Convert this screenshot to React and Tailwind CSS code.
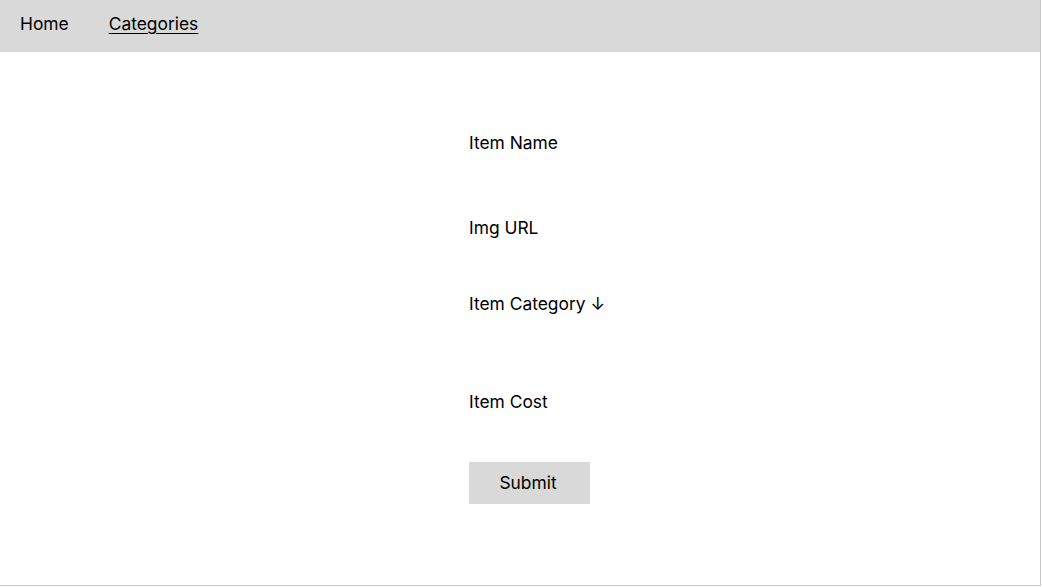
export default function App() {
  return (
    <div className="w-[1042px] h-[587px] bg-white" style={{ fontFamily: "Inter, 'Noto Sans', sans-serif" }}>
      <div className="w-[1041px] h-[586px] border-r border-b border-[#c8c8c8] flex flex-col">
        <nav className="h-[52px] bg-[#d9d9d9] flex items-center pl-[20px] pb-[4px] gap-[40px] text-[17.4px] text-black">
          <span className="leading-[22px]">Home</span>
          <span className="leading-[22px] underline underline-offset-[3px]">Categories</span>
        </nav>
        <main className="flex flex-col items-start pl-[469px] text-[17.4px] text-black">
          <label className="mt-[80px] leading-[22px]">Item Name</label>
          <label className="mt-[63px] leading-[22px]">Img URL</label>
          <label className="mt-[54px] leading-[22px]">Item Category ↓</label>
          <label className="mt-[76px] leading-[22px]">Item Cost</label>
          <button className="mt-[49px] w-[121px] h-[42px] pr-[3px] bg-[#d9d9d9] text-[17.4px] leading-[22px]">Submit</button>
        </main>
      </div>
    </div>
  );
}
